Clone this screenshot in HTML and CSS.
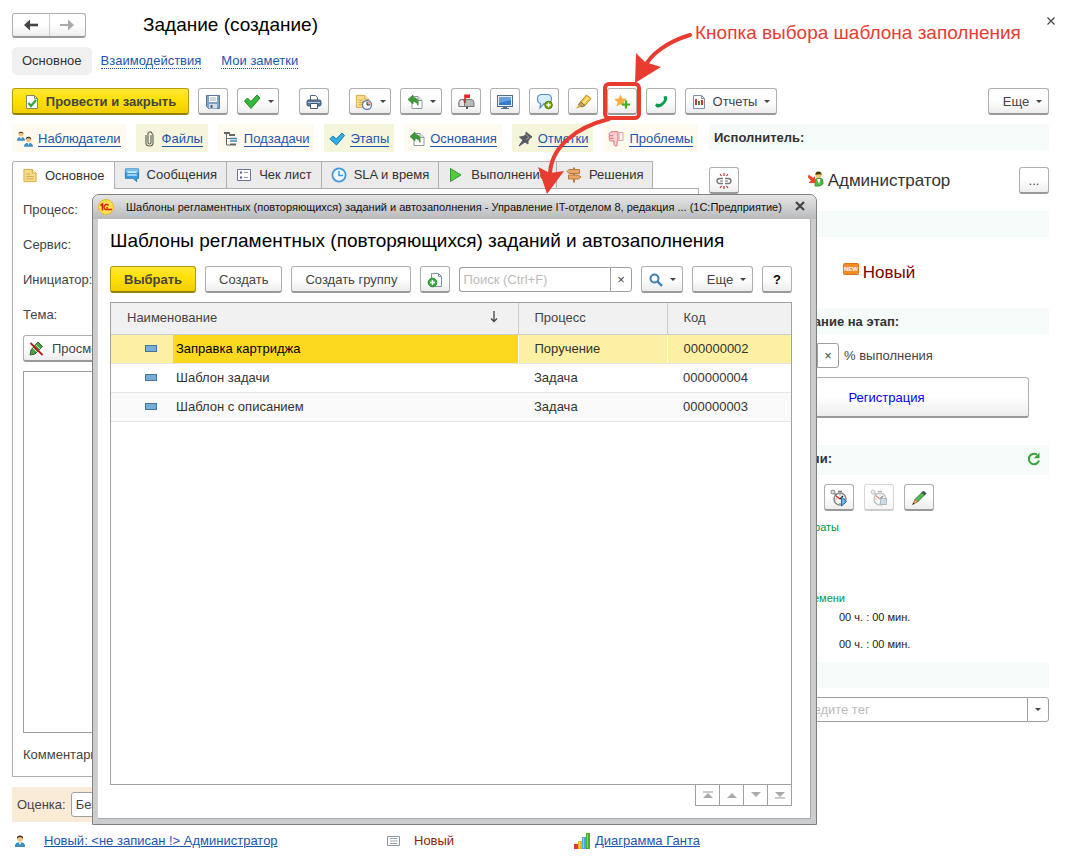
FILE: index.html
```
<!DOCTYPE html>
<html lang="ru">
  <head>
    <meta charset="UTF-8" />
    <meta name="viewport" content="width=device-width, initial-scale=1.0" />
    <title>Задание (создание)</title>
    <link rel="stylesheet" href="styles.css">
  </head>
  <body>
    <svg class="sprite" aria-hidden="true">
      <symbol id="i-copy" viewBox="0 0 16 16">
        <path d="M5 2.500h6l4 4v8H5z" fill="#fff" stroke="#8b99a5"/>
        <path d="M11 2.500v4h4" fill="#dfe5ea" stroke="#8b99a5"/>
        <path d="M1 5.500 6 1v2.500c4 0 6 3 5 8-1-3-2.500-4-5-4V10z" fill="#3f9a35" stroke="#2d7526" stroke-width=".6"/>
      </symbol>
      <symbol id="i-doc" viewBox="0 0 16 16">
        <path d="M1.500 1.500h9l4 4v9h-13z" fill="#f8dc8c" stroke="#d3a941"/>
        <path d="M10.500 1.500v4h4" fill="#fff1c2" stroke="#d3a941"/>
        <path d="M4 6.500h4M4 9h8M4 11.500h8" stroke="#cfa546"/>
      </symbol>
      <symbol id="i-man" viewBox="0 0 12 14">
        <path d="M0 14c0-4 2-5.500 6-5.500s6 1.500 6 5.500z" fill="#3a8fc4"/>
        <path d="M4.500 8.500 6 12l1.500-3.500z" fill="#fff"/>
        <circle cx="6" cy="4.500" r="3.300" fill="#f3c07c"/>
        <path d="M2.500 5C2 1.500 3.500.5 6 .5s4 1 3.500 4.500C9 3 8 2.500 6 2.500S3 3 2.500 5z" fill="#4b3423"/>
      </symbol>
      <symbol id="i-stopwatch" viewBox="0 0 18 18">
        <circle cx="10" cy="10" r="6" fill="#f8f8f8" stroke="#888" stroke-width="1.500"/>
        <circle cx="3" cy="3" r="2" fill="#ddd" stroke="#888"/>
        <path d="m4.500 4.500 2 2M8 2.500h4" stroke="#777" stroke-width="1.600"/>
        <path d="m6 7 4 3" stroke="#e02b1d" stroke-width="1.500"/>
        <path d="m10 10 3-3" stroke="#222" stroke-width="1.500"/>
        <path d="M10 5.500v1M10 14v1M5.500 10h1M14 10h1" stroke="#666"/>
      </symbol>
    </svg>

    <header class="top">
      <div class="history">
        <button aria-label="Назад"><svg width="16" height="12" viewBox="0 0 16 12"><path d="M1 6 7 .5v11z" fill="#444"/><path d="M5 6h10" stroke="#444" stroke-width="2.600"/></svg></button>
        <button aria-label="Вперед"><svg width="16" height="12" viewBox="0 0 16 12"><path d="M15 6 9 .5v11z" fill="#aaa"/><path d="M11 6H1" stroke="#aaa" stroke-width="2"/></svg></button>
      </div>
      <h1>Задание (создание)</h1>
      <button class="close" aria-label="Закрыть"><svg width="8" height="8" viewBox="0 0 8 8"><path d="m.5.500 7 7m0-7-7 7" stroke="#444" stroke-width="1.200"/></svg></button>
    </header>

    <nav class="sections">
      <a class="current">Основное</a>
      <a href="#">Взаимодействия</a>
      <a href="#">Мои заметки</a>
    </nav>

    <div class="toolbar">
      <button class="btn primary">
        <svg width="14" height="16" viewBox="0 0 14 16"><path d="M1.500 1.500h8l3 3v10h-11z" fill="#fff" stroke="#7d8a6b"/><path d="M9.500 1.500v3h3" fill="none" stroke="#7d8a6b"/><path d="m3.500 9 2.500 3 5-6" fill="none" stroke="#35a83c" stroke-width="2.400"/></svg>
        Провести и закрыть
      </button>
      <button class="btn" aria-label="Записать"><svg width="16" height="16" viewBox="0 0 16 16"><path d="M1.500 1.500h13v13h-11l-2-2z" fill="#7fa3c9" stroke="#5579a3"/><path d="M4 2h8v6H4z" fill="#fff"/><path d="M5 4h6M5 6h6" stroke="#9cb2c8"/><path d="M4 10h8v4.500H4z" fill="#d5dee8"/><path d="M5.500 11h2v3h-2z" fill="#3d638c"/></svg></button>
      <button class="btn drop" aria-label="Провести"><svg width="18" height="16" viewBox="0 0 18 16"><path d="m1.500 7 3-3L8 7.500 14 1l3 3-9 10.500z" fill="#36b83d" stroke="#218c2a"/></svg><i class="caret"></i></button>
      <button class="btn apart" aria-label="Печать"><svg width="16" height="16" viewBox="0 0 16 16"><path d="M4.500 1.500h5l2 2V7h-7z" fill="#fff" stroke="#4d6580"/><rect x="1" y="6" width="14" height="6" rx="1.500" fill="#5b7896" stroke="#3f5873"/><path d="M4.500 9.500h7v5h-7z" fill="#fff" stroke="#3f5873"/><path d="M2 8.500h12" stroke="#b8c8d8"/></svg></button>
      <button class="btn drop apart" aria-label="Отложить"><svg width="18" height="16" viewBox="0 0 18 16"><use href="#i-doc" width="15" height="15"/><circle cx="12" cy="11" r="4.500" fill="#fff" stroke="#557ea9" stroke-width="1.300"/><path d="M12 11V7a4 4 0 0 1 4 4z" fill="#f3a9a3"/><path d="M12 8v3h3" fill="none" stroke="#335"/></svg><i class="caret"></i></button>
      <button class="btn drop" aria-label="Создать на основании"><svg width="16" height="16"><use href="#i-copy"/></svg><i class="caret"></i></button>
      <button class="btn" aria-label="Почта"><svg width="17" height="16" viewBox="0 0 17 16"><path d="M4 5.500h9q3 0 3 3v4H1v-4q0-3 3-3z" fill="#bbb" stroke="#777"/><path d="M1 12.500V8q.5-2.500 2.800-2.500T6.500 8v4.500z" fill="#e5e5e5" stroke="#777"/><path d="M9 12.500V15" stroke="#555" stroke-width="2"/><path d="M7 9V.5" stroke="#d11c1c" stroke-width="1.500"/><path d="M7 .5h5v3.500H7z" fill="#e22"/></svg></button>
      <button class="btn" aria-label="Экран"><svg width="16" height="16" viewBox="0 0 16 16"><rect x=".5" y="1.500" width="15" height="11" fill="#e8eef4" stroke="#526c8e"/><path d="M2 3h12v8H2z" fill="#357bc8"/><path d="M2 3h12v3L2 9z" fill="#65a1df"/><path d="M6 13h4v1H6zM4 14h8v1H4z" fill="#526c8e"/></svg></button>
      <button class="btn" aria-label="Обсуждение"><svg width="17" height="17" viewBox="0 0 17 17"><path d="M5 1.500h7Q15.500 2 15.500 6T12 10.500H8L4 15l.5-4.500Q1.500 10 1.500 6T5 1.500z" fill="#d6efff" stroke="#5b95c8" stroke-width="1.200"/><circle cx="12.500" cy="12" r="3.800" fill="#78a900" stroke="#547900"/><path d="M12.500 9.800v4.400M10.300 12h4.400" stroke="#fff" stroke-width="1.300"/></svg></button>
      <button class="btn" aria-label="Выделить"><svg width="17" height="16" viewBox="0 0 17 16"><path d="m11.500 1 4.500 3.500-6 7L5.500 8z" fill="#f6c33c" stroke="#bd8a17"/><path d="m12 3 2 1.500L9 10 7.500 8.500z" fill="#ffe69a"/><path d="M5.500 8 10 11.500 7 13l-3.500-2.500z" fill="#c9a86a" stroke="#8a6a33"/><path d="m3.500 11 2.500 2-5 1.500z" fill="#e0a12c"/></svg></button>
      <button class="btn" aria-label="Шаблон заполнения"><svg width="17" height="16" viewBox="0 0 17 16"><path d="m6.500.5 1.900 4 4.600.3-3.400 3.100 1.100 4.600-4.200-2.300-4 2.400 1-4.700L0 5l4.600-.6z" fill="#f8ad43"/><path d="M12 6.500v8M8 10.500h8" stroke="#37b21e" stroke-width="2.200"/></svg></button>
      <button class="btn" aria-label="Позвонить"><svg width="14" height="14" viewBox="0 0 14 14"><path d="m9.500 1.500 3-.5c1 1.500 1 4-1 6.500-2 3-5 5-8.500 5L1 10.500l1.500-2 3 .5C8 8 9.800 6 10 4z" fill="#0b9b4b"/></svg></button>
      <button class="btn reports"><svg width="14" height="16" viewBox="0 0 14 16"><path d="M1.500 1.500h8l3 3v10h-11z" fill="#fff" stroke="#7e8fa0"/><path d="M9.500 1.500v3h3" fill="none" stroke="#7e8fa0"/><path d="M3 5h2v6H3z" fill="#d33"/><path d="M6 7h2v4H6z" fill="#2a9a36"/><path d="M9 6h2v5H9z" fill="#d33"/></svg>Отчеты<i class="caret"></i></button>
      <button class="btn more">Еще<i class="caret"></i></button>
    </div>

    <div class="columns">
      <main class="left">
        <nav class="links">
          <a href="#"><svg width="16" height="16" viewBox="0 0 16 16"><use href="#i-man" x="0" y="0" width="8" height="10"/><use href="#i-man" x="7" y="5" width="9" height="11"/></svg><span>Наблюдатели</span></a>
          <a href="#"><svg width="16" height="16" viewBox="0 0 16 16"><path d="M10 4v7.500a1.500 1.500 0 0 1-3 0V3.500a1.700 1.700 0 0 1 4-1q1 .5 1 2V12c0 4-7 4-7 0V4" fill="none" stroke="#66665a" stroke-width="1.200"/></svg><span>Файлы</span></a>
          <a href="#"><svg width="16" height="16" viewBox="0 0 16 16"><path d="M3.500 2v12H7M3.500 7.500H7" fill="none" stroke="#666"/><path d="M1 2h6M6 4h6M7 13.500h6" stroke="#666" stroke-width="2"/><path d="M7 7.500h7M7 10h7" stroke="#3b85b7" stroke-width="1.500"/></svg><span>Подзадачи</span></a>
          <a href="#"><svg width="16" height="16" viewBox="0 0 16 16"><path d="m.8 8 3-3 3.500 3L13 2l2.500 2.500L7.500 14z" fill="#31aee8" stroke="#1879a9"/></svg><span>Этапы</span></a>
          <a href="#"><svg width="16" height="16"><use href="#i-copy"/></svg><span>Основания</span></a>
          <a href="#"><svg width="16" height="16" viewBox="0 0 16 16"><path d="m9 1 6 5-2 1-2 3v3L8 11l-6 4 4-6-3.500-3L6 5.500 9 4z" fill="#555b60" stroke="#555b60"/><path d="m9 3.500 3 3-3 2" fill="none" stroke="#aaa"/></svg><span>Отметки</span></a>
          <a href="#"><svg width="16" height="16" viewBox="0 0 16 16"><path d="M3 .7h7v8.500l-1 2v3.500c-2 1-3-.5-3-2.500V10H2.500Q.7 9.500 1.500 7.500 0 6 1.500 4.800 0 2.500 3 .7z" fill="#fbd0d1" stroke="#dc7478"/><path d="M2 4.700h3.500M2 7.400h3.500" stroke="#dc7478"/><path d="M11 1.500h4v8h-4z" fill="#fdf3f3" stroke="#d9a4a5"/></svg><span>Проблемы</span></a>
        </nav>

        <div class="tabs" role="tablist">
          <button role="tab" class="active"><svg width="16" height="15" viewBox="0 0 16 16"><use href="#i-doc"/></svg>Основное</button>
          <button role="tab"><svg width="16" height="16" viewBox="0 0 17 16"><path d="M1.500 1.500h14v10h-2V15l-4-3.500h-8z" fill="#3a9ede" stroke="#277cb7"/><path d="M1.500 1.500h14V5h-14z" fill="#71bdeb"/><path d="M3.500 5h10M3.500 8h10" stroke="#fff" stroke-width="1.300"/></svg>Сообщения</button>
          <button role="tab"><svg width="16" height="14" viewBox="0 0 16 14"><path d="M1.500 1.500h13v11h-13z" fill="#fff" stroke="#6b7398"/><path d="M4 4.500h2M4 9.500h2" stroke="#555f8c" stroke-width="2"/><path d="M8 4.500h4M8 9.500h4" stroke="#8b93b4"/></svg>Чек лист</button>
          <button role="tab"><svg width="16" height="16" viewBox="0 0 16 16"><circle cx="8" cy="8" r="6.600" fill="#f4faff" stroke="#3f96e3" stroke-width="1.800"/><path d="M8 4v4.500h4" fill="none" stroke="#3f96e3" stroke-width="1.500"/></svg>SLA и время</button>
          <button role="tab"><svg width="16" height="16" viewBox="0 0 16 16"><path d="M2.500 1.500 13 8 2.500 14.500z" fill="#55c943" stroke="#339b29"/></svg>Выполнение</button>
          <button role="tab"><svg width="16" height="16" viewBox="0 0 16 16"><path d="M7 .5h2v15H7z" fill="#b9793d"/><path d="M3 2.500h10.500v4H3L1 4.500z" fill="#e5a76c" stroke="#b9793d"/><path d="M2.500 8h10l2.500 2-2.500 2h-10z" fill="#e5a76c" stroke="#b9793d"/></svg>Решения</button>
        </div>

        <div class="panel">
          <div class="field"><label for="process">Процесс:</label><input id="process" class="input"></div>
          <div class="field"><label for="service">Сервис:</label><input id="service" class="input"></div>
          <div class="field"><label for="initiator">Инициатор:</label><input id="initiator" class="input"></div>
          <div class="field"><label for="subject">Тема:</label><input id="subject" class="input"></div>
          <button class="btn preview"><svg width="15" height="15" viewBox="0 0 15 15"><path d="m9 1 4.500 4.500L6 13l-5 1 1-5z" fill="#4ca146" stroke="#286b25"/><path d="m4 7 4 4M7 4l4 4" stroke="#d4f0c5"/><path d="m1.500 2 12 12" stroke="#b51c1c" stroke-width="1.800"/></svg>Просмотр</button>
          <textarea aria-label="Описание"></textarea>
          <div class="field"><label for="comment">Комментарий:</label><input id="comment" class="input"></div>
        </div>

        <div class="rating">
          <label for="rate">Оценка:</label>
          <select id="rate"><option>Без оценки</option></select>
        </div>
      </main>

      <aside class="right">
        <h2>Исполнитель:</h2>
        <div class="person">
          <button class="btn" aria-label="Очистить"><svg width="16" height="16" viewBox="0 0 16 16"><path d="M7 5.500H3.500a2.500 2.500 0 0 0 0 5H7M9 5.500h3.500a2.500 2.500 0 0 1 0 5H9" fill="none" stroke="#777" stroke-width="1.500"/><path d="M4 8h3M9 8h3" stroke="#777" stroke-width="1.200"/><path d="M8 0v3M4 1l1.500 2M12 1l-1.500 2M8 13v3M4 15l1.500-2M12 15l-1.500-2" stroke="#b22" stroke-width="1.100"/></svg></button>
          <span class="big"><svg width="16" height="16" viewBox="0 0 16 16"><path d="M7 15V9q2-3 5-2 3 0 3 4v2q-3 3-8 2z" fill="#4eb84b" stroke="#2d8737" stroke-width=".7"/><path d="m9 8 2 5 1.500-5z" fill="#fff"/><circle cx="10.500" cy="4" r="3" fill="#f3c56b"/><path d="M7.500 4Q7 .5 10.500.5T13.500 4Q12 2.500 7.500 4z" fill="#4c3e08"/><path d="m1 3.500 4 3.500 2-2v7H.5L3 9.500-.5 6z" fill="#f04629"/></svg>Администратор</span>
          <button class="btn">...</button>
        </div>
        <h2></h2>
        <div class="status"><span class="big new"><svg width="16" height="12" viewBox="0 0 16 12"><rect x=".5" y=".5" width="15" height="11" rx="1" fill="#f38b27" stroke="#dc741a"/><text x="8" y="8" text-anchor="middle">NEW</text></svg>Новый</span></div>
        <h2>Выполнить задание на этап:</h2>
        <div class="percent">
          <div class="combo"><input id="percent" class="input"><button aria-label="Очистить процент">×</button></div>
          <label for="percent">% выполнения</label>
        </div>
        <button class="btn stage">Регистрация</button>
        <h2 class="tall">Затраты времени:
          <button aria-label="Обновить"><svg width="14" height="14" viewBox="0 0 14 14"><path d="M12 8.500A5.200 5.200 0 1 1 10 2.800" fill="none" stroke="#32a532" stroke-width="2"/><path d="M12.500.5v5.700H7z" fill="#32a532"/></svg></button>
        </h2>
        <div class="timer">
          <button class="btn" aria-label="Начать"><svg width="18" height="18" viewBox="0 0 18 18"><use href="#i-stopwatch"/><path d="m11.500 8 5 4.500-5 4.500z" fill="#67b5ee" stroke="#286fa7"/></svg></button>
          <button class="btn" aria-label="Остановить" disabled><svg width="18" height="18" viewBox="0 0 18 18"><use href="#i-stopwatch"/><path d="M10.500 9.500h6v6h-6z" fill="#9eb8cd" stroke="#56758f"/></svg></button>
          <button class="btn" aria-label="Изменить"><svg width="16" height="16" viewBox="0 0 16 16"><path d="m4 9.500 7-7 2.500 2.500-7 7z" fill="#57b956" stroke="#358338"/><path d="m11 2.500 1.500-1.500L15 3.500 13.500 5z" fill="#3e515d" stroke="#3e515d"/><path d="m4 9.500 2.500 2.500-4.500 2z" fill="#f0bd69" stroke="#ae762e"/><path d="m2.500 12.500-1.500 2.500 2.500-1z" fill="#222"/></svg></button>
        </div>
        <h3>Трудозатраты</h3>
        <h3 class="second">Учет времени</h3>
        <p class="time">00 ч. : 00 мин.</p>
        <p class="time">00 ч. : 00 мин.</p>
        <h2></h2>
        <div class="combo tag"><input class="input" aria-label="Тег" placeholder="Введите тег"><button aria-label="Выбрать тег"><i class="caret"></i></button></div>
      </aside>
    </div>

    <footer class="bottom">
      <div><svg width="12" height="12" viewBox="0 0 12 14"><use href="#i-man"/></svg><a href="#">Новый: &lt;не записан !&gt; Администратор</a></div>
      <div class="state"><svg width="14" height="11" viewBox="0 0 14 11"><path d="M.5.500h12v9H.5z" fill="#fff" stroke="#8b99a5"/><path d="M3 2.500h7.500M3 5h7.500M3 7.500h7.500" stroke="#9aa5ae"/></svg>Новый</div>
      <div class="gantt"><svg width="16" height="16" viewBox="0 0 16 16"><path d="M0 11h4v5H0z" fill="#e3372b"/><path d="M4 8h4v8H4z" fill="#f4b51f"/><path d="M8 4h4v12H8z" fill="#4fa5e8"/><path d="M12 0h4v16h-4z" fill="#46ac36"/><path d="M13 1h1v14h-1M9 5h1v10H9M5 9h1v6H5" fill="#fff" opacity=".4"/></svg><a href="#">Диаграмма Ганта</a></div>
    </footer>

    <div class="dialog" role="dialog" aria-label="Шаблоны">
      <div class="caption">
        <svg width="16" height="16" viewBox="0 0 16 16"><circle cx="8" cy="8" r="7.500" fill="#fde24d" stroke="#e8b927"/><path d="M2.500 6.500 4.500 5v6.500" fill="none" stroke="#d8200f" stroke-width="1.600"/><path d="M10.500 6.500a2.500 2.500 0 1 0-2 4H14M10 8.700H8.500" fill="none" stroke="#d8200f" stroke-width="1.400"/></svg>
        <span>Шаблоны регламентных (повторяющихся) заданий и автозаполнения - Управление IT-отделом 8, редакция ...</span>
        <span class="app">(1С:Предприятие)</span>
        <button aria-label="Закрыть окно"><svg width="10" height="10" viewBox="0 0 10 10"><path d="m1 1 8 8m0-8L1 9" stroke="#444" stroke-width="2.200"/></svg></button>
      </div>
      <div class="content">
        <h1>Шаблоны регламентных (повторяющихся) заданий и автозаполнения</h1>
        <div class="commands">
          <button class="btn primary">Выбрать</button>
          <button class="btn">Создать</button>
          <button class="btn">Создать группу</button>
          <button class="btn" aria-label="Скопировать"><svg width="16" height="16" viewBox="0 0 16 16"><path d="M4.500 1.500h7l3 3v10h-10z" fill="#fff" stroke="#8294a4"/><path d="M11.500 1.500v3h3" fill="none" stroke="#8294a4"/><circle cx="5.500" cy="10.500" r="4.300" fill="#38ad3e" stroke="#1f8a2a"/><path d="M5.500 8v5M3 10.500h5" stroke="#fff" stroke-width="1.400"/></svg></button>
          <div class="combo"><input class="input" aria-label="Поиск" placeholder="Поиск (Ctrl+F)"><button aria-label="Очистить поиск">×</button></div>
          <button class="btn drop" aria-label="Найти"><svg width="14" height="14" viewBox="0 0 14 14"><circle cx="5.500" cy="5.500" r="4" fill="none" stroke="#3b80b4" stroke-width="2"/><path d="m8.500 8.500 4.500 4.500" stroke="#3b80b4" stroke-width="2.400"/></svg><i class="caret"></i></button>
          <button class="btn more">Еще<i class="caret"></i></button>
          <button class="btn help">?</button>
        </div>
        <div class="grid">
          <table>
            <thead>
              <tr><th>Наименование<svg width="8" height="12" viewBox="0 0 8 12"><path d="M4 0v10M1 7.500l3 3 3-3" fill="none" stroke="#444" stroke-width="1.300"/></svg></th><th>Процесс</th><th>Код</th></tr>
            </thead>
            <tbody>
              <tr class="selected"><td><span>Заправка картриджа</span></td><td>Поручение</td><td>000000002</td></tr>
              <tr><td><span>Шаблон задачи</span></td><td>Задача</td><td>000000004</td></tr>
              <tr><td><span>Шаблон с описанием</span></td><td>Задача</td><td>000000003</td></tr>
            </tbody>
          </table>
        </div>
        <div class="pager">
          <button aria-label="В начало"><svg width="12" height="8"><path d="M1 1h10" stroke="#999"/><path d="m1 7 5-5 5 5z" fill="#aaa"/></svg></button>
          <button aria-label="Вверх"><svg width="12" height="8"><path d="m1 7 5-5 5 5z" fill="#aaa"/></svg></button>
          <button aria-label="Вниз"><svg width="12" height="8"><path d="m1 1 5 5 5-5z" fill="#aaa"/></svg></button>
          <button aria-label="В конец"><svg width="12" height="8"><path d="M1 7h10" stroke="#999"/><path d="m1 1 5 5 5-5z" fill="#aaa"/></svg></button>
        </div>
      </div>
    </div>

    <!-- callout -->
    <svg class="callout" width="660" height="210" viewBox="0 0 660 210" fill="none" stroke="#e83c31" stroke-width="4" stroke-linecap="round">
      <rect x="605" y="84" width="34" height="34" rx="4"/>
      <path d="M609 119c-32 8-60 28-59 58"/>
      <path d="m547 194-9-27 12 6 14-2z" fill="#e83c31" stroke="none"/>
    </svg>
    <svg class="callout" width="700" height="90" viewBox="0 0 700 90" fill="none" stroke="#e83c31" stroke-width="4" stroke-linecap="round">
      <path d="M690 35c-20 6-40 18-47 35"/>
      <path d="m635 83 1-30 9 9 16 5z" fill="#e83c31" stroke="none"/>
    </svg>
    <p class="note">Кнопка выбора шаблона заполнения</p>
  </body>
</html>
```
FILE: styles.css
```
* {
  margin: 0;
  padding: 0;
  box-sizing: border-box;
}
body {
  position: relative;
  padding: 12px 18px 12px 12px;
  background: #fff;
  color: #444;
  font-family: "Liberation Sans", Arial, sans-serif;
  font-size: 13px;
  line-height: 16px;
}
button, input, select, textarea {
  font: inherit;
  color: inherit;
}
button {
  background: none;
  border: none;
  white-space: nowrap;
}
svg {
  flex: none;
}
a {
  color: #1c55ae;
}
.sprite {
  display: none;
}
h1 {
  font-size: 19px;
  line-height: 26px;
  font-weight: normal;
  color: #000;
}

/* buttons */
.btn {
  display: flex;
  align-items: center;
  justify-content: center;
  gap: 7px;
  height: 27px;
  min-width: 30px;
  padding: 1px 5px 0;
  border: 1px solid #b0b0b0;
  border-bottom: 2px solid #999;
  border-radius: 3px;
  background: linear-gradient(#fff 50%, #ededed);
}
.btn:disabled {
  opacity: .5;
}
.primary {
  border-color: #b39b12;
  border-bottom-color: #94800d;
  background: linear-gradient(#ffe836, #ffdf00 50%, #f0ce00);
  font-weight: bold;
}
.drop {
  width: 42px;
}
.caret {
  border: 3px solid transparent;
  border-top-color: #444;
  border-bottom: none;
}

/* header */
.top {
  display: flex;
  align-items: center;
  height: 26px;
}
.history {
  display: flex;
  width: 74px;
  height: 25px;
  margin-right: 57px;
  border: 1px solid #b0b0b0;
  border-bottom: 2px solid #999;
  border-radius: 3px;
  background: linear-gradient(#fff 50%, #ededed);
}
.history button {
  display: flex;
  flex: 1;
  align-items: center;
  justify-content: center;
}
.history button + button {
  border-left: 1px solid #ccc;
}
.close {
  width: 20px;
  height: 20px;
  margin: -8px -12px 0 auto;
}
.sections {
  display: flex;
  align-items: center;
  gap: 20px;
  height: 28px;
  margin-top: 9px;
}
.sections a {
  text-decoration: none;
  border-bottom: 1px dotted #1c55ae;
  line-height: 15px;
}
.sections .current {
  margin-right: -11px;
  padding: 0 10px;
  border: none;
  border-radius: 5px;
  background: #f0f0f0;
  color: #333;
  line-height: 28px;
}
.toolbar {
  display: flex;
  gap: 9px;
  margin-top: 13px;
}
.toolbar .primary {
  width: 177px;
}
.apart {
  margin-left: 11px;
}
.reports {
  width: 92px;
}
.more {
  width: 61px;
  padding-left: 13px;
}
.toolbar .more {
  margin-left: auto;
}

/* form */
.columns {
  display: flex;
  gap: 10px;
  margin-top: 9px;
}
.left {
  flex: 1;
  min-width: 0;
}
.right {
  width: 340px;
}
.links {
  display: flex;
  gap: 10px;
}
.links a {
  display: flex;
  align-items: center;
  gap: 5px;
  height: 28px;
  padding: 1px 5px 0;
  background: #fffaf0;
  text-decoration: none;
}
.links a:nth-child(even) {
  background: #f5f5dc;
}
.links span {
  border-bottom: 1px solid #1c55ae;
  line-height: 15px;
}
.tabs {
  display: flex;
  margin-top: 9px;
}
.tabs button {
  display: flex;
  align-items: center;
  gap: 7px;
  height: 27px;
  margin-left: -1px;
  padding: 0 9px;
  border: 1px solid #b0b0b0;
  border-bottom: none;
  background: #ebebeb;
  color: #333;
}
.tabs .active {
  height: 28px;
  margin: 0 0 -1px;
  border-radius: 3px 0 0;
  background: #fff;
}
.panel {
  width: 687px;
  max-width: 100%;
  padding: 3px 10px 4px;
  border: 1px solid #b0b0b0;
}
.field {
  display: flex;
  align-items: center;
  height: 35px;
}
.field label {
  width: 90px;
}
.input {
  flex: 1;
  min-width: 0;
  height: 25px;
  padding: 0 3px;
  border: 1px solid #a0a0a0;
  border-radius: 3px;
}
.input::placeholder {
  color: #bbb;
}
.preview {
  gap: 8px;
  margin-top: 3px;
}
.panel textarea {
  display: block;
  width: 100%;
  height: 362px;
  margin: 9px 0 4px;
  border: 1px solid #a0a0a0;
  resize: none;
}
.rating {
  display: flex;
  align-items: center;
  gap: 5px;
  height: 35px;
  margin-top: 10px;
  padding: 0 5px;
  background: #faebd7;
}
.rating select {
  width: 160px;
  height: 25px;
  border: 1px solid #a0a0a0;
  border-radius: 3px;
  background: #fff;
}

/* right column */
h2 {
  height: 26px;
  padding: 1px 5px 0;
  background: #f4fbf8;
  color: #333;
  font-size: 13px;
  line-height: 26px;
}
.person {
  display: flex;
  align-items: center;
  justify-content: space-between;
  margin: 17px 0;
}
.big {
  display: flex;
  gap: 4px;
  color: #333;
  font-size: 17px;
  line-height: 20px;
}
.status {
  display: flex;
  justify-content: center;
  padding: 26px 0 25px;
}
.new {
  color: #800000;
}
.new text {
  fill: #fff;
  font-size: 6px;
  font-weight: bold;
}
.percent {
  display: flex;
  align-items: center;
  gap: 5px;
  margin: 9px 0;
}
.combo {
  display: flex;
  width: 130px;
}
.combo .input {
  border-right: none;
  border-radius: 3px 0 0 3px;
}
.combo button {
  display: flex;
  align-items: center;
  justify-content: center;
  width: 22px;
  border: 1px solid #a0a0a0;
  border-radius: 0 3px 3px 0;
  background: #fff;
}
.stage {
  width: 285px;
  height: 41px;
  margin: 0 20px 27px 35px;
  color: #0000ff;
}
h2.tall {
  display: flex;
  justify-content: space-between;
  height: 30px;
}
.tall button {
  padding: 2px 8px 0;
}
.timer {
  display: flex;
  gap: 10px;
  margin: 9px 0 8px 115px;
}
.timer .btn {
  width: 30px;
}
h3 {
  width: 130px;
  color: #009646;
  font-size: 11px;
  font-weight: normal;
  line-height: 16px;
  text-align: right;
}
h3.second {
  width: 136px;
  margin-top: 55px;
}
.time {
  padding: 3px 0 8px 130px;
  color: #222;
  font-size: 11px;
}
.time:last-of-type {
  padding-bottom: 10px;
}
.tall button {
  padding-right: 3px;
}
.tag {
  width: 100%;
  margin-top: 9px;
}
.tag .input {
  padding-left: 88px;
}

/* footer */
.bottom {
  display: grid;
  grid-template-columns: 375px 187px 1fr;
  margin-top: 11px;
}
.bottom div {
  display: flex;
  align-items: center;
  gap: 18px;
  padding-left: 2px;
}
.bottom .state {
  gap: 13px;
  padding-left: 0;
  color: #8b2500;
}
.bottom .gantt {
  gap: 5px;
  padding-left: 0;
}

/* dialog window */
.dialog {
  position: absolute;
  left: 92px;
  top: 194px;
  width: 725px;
  height: 631px;
  display: flex;
  flex-direction: column;
  padding: 0 5px 5px;
  border: 1px solid #808080;
  border-radius: 7px 7px 0 0;
  background: #cbcdcf;
}
.caption {
  display: flex;
  align-items: center;
  height: 24px;
  margin: 0 -5px;
  padding: 0 11px 0 5px;
  border-radius: 6px 6px 0 0;
  background: linear-gradient(#e6e6e6, #b8babc);
  color: #111;
  font-size: 11px;
  white-space: nowrap;
}
.caption svg {
  margin-right: 12px;
}
.caption .app {
  margin-left: 3px;
}
.caption button {
  width: 10px;
  height: 16px;
  margin-left: auto;
}
.content {
  flex: 1;
  display: flex;
  flex-direction: column;
  padding: 9px 18px 12px 12px;
  border: 1px solid #a8aaac;
  border-width: 0 1px 1px 0;
  background: #fff;
}
.commands {
  display: flex;
  gap: 9px;
  margin-top: 12px;
}
.commands .btn {
  flex: none;
}
.commands .btn:nth-child(-n+3) {
  padding: 1px 13px 0;
}
.commands .combo {
  flex: 1;
  height: 25px;
  margin-top: 1px;
}
.help {
  color: #000;
  font-weight: bold;
}
.grid {
  flex: 1;
  margin-top: 9px;
  border: 1px solid #a0a0a0;
}
table {
  width: 100%;
  table-layout: fixed;
  border-collapse: collapse;
}
th {
  height: 31px;
  padding: 0 16px;
  border-right: 1px solid #ccc;
  border-bottom: 1px solid #ccc;
  background: #f1f1f1;
  font-weight: normal;
  text-align: left;
}
th:last-child {
  width: 124px;
  border-right: none;
}
th:nth-child(2) {
  width: 149px;
}
th svg {
  float: right;
  margin: 1px 4px 0 0;
}
td {
  height: 29px;
  padding: 0 16px;
  border-bottom: 1px solid #e5e5e5;
  color: #333;
}
tbody tr:nth-child(odd) {
  background: #fafafa;
}
tbody tr.selected:nth-child(odd) {
  background: #fcf0a2;
}
.selected td:not(:last-child) {
  border-right: 1px solid #fff;
}
td:first-child {
  padding: 0;
}
td span {
  display: block;
  margin-left: 62px;
  padding-left: 3px;
  line-height: 28px;
}
td span::before {
  content: "";
  float: left;
  width: 10px;
  height: 5px;
  margin: 10px 0 0 -31px;
  border: 1px solid #44749b;
  background: #78add3;
}
.selected span {
  background: #fcd91f;
  color: #000;
}
.pager {
  display: flex;
  align-self: flex-end;
}
.pager button {
  width: 25px;
  height: 21px;
  margin-left: -1px;
  border: 1px solid #a0a0a0;
  border-top: none;
}

/* callout */
.callout {
  position: absolute;
  left: 0;
  top: 0;
  pointer-events: none;
}
.note {
  position: absolute;
  left: 695px;
  top: 21px;
  color: #e83c31;
  font-size: 19px;
  line-height: 24px;
}
```
